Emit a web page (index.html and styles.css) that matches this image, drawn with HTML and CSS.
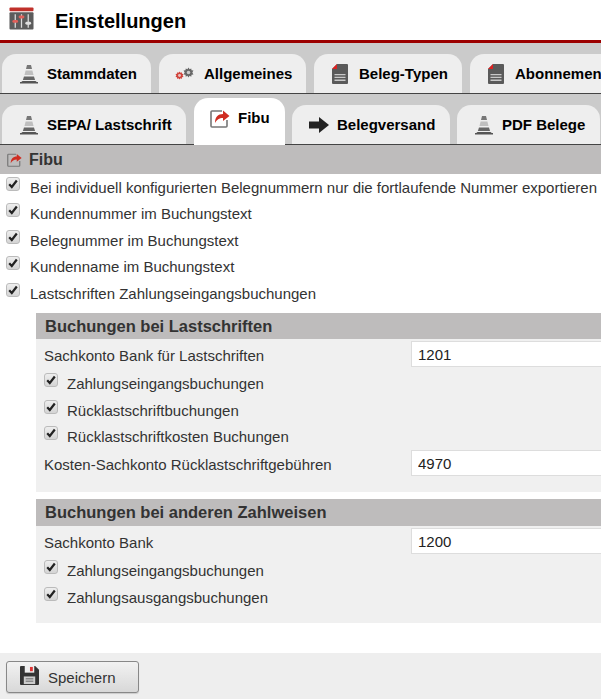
FILE: index.html
```html
<!DOCTYPE html>
<html lang="de">
<head>
<meta charset="utf-8">
<title>Einstellungen</title>
<link rel="stylesheet" href="styles.css">
</head>
<body>
<svg class="defs" width="0" height="0" aria-hidden="true">
  <symbol id="cone" viewBox="0 0 20 20">
    <path d="M8 1h4l1 4H7z" fill="#777"/>
    <path d="M6.600 6.500h6.800l1.100 4.500h-9z" fill="#999" opacity=".55"/>
    <path d="M5 12.500h10l1.100 3.500H3.900z" fill="#666"/>
    <path d="M1 19l2.500-2h13l2.500 2z" fill="#555"/>
    <rect x="1" y="18" width="18" height="1.500" fill="#555"/>
  </symbol>
  <symbol id="doc" viewBox="0 0 16 20">
    <path d="M5 0h10a1 1 0 0 1 1 1v18a1 1 0 0 1-1 1H1a1 1 0 0 1-1-1V5z" fill="#5a5a5a"/>
    <path d="M0 5l5-5v5z" fill="#d22"/>
    <path d="M2.500 10h11v1.300h-11zM2.500 12.800h11v1.300h-11zM2.500 15.600h11v1.300h-11z" fill="#c9c9c9"/>
  </symbol>
  <symbol id="export" viewBox="0 0 20 20">
    <path d="M12 3H2a1 1 0 0 0-1 1v14a1 1 0 0 0 1 1h14a1 1 0 0 0 1-1v-6" fill="none" stroke="#777" stroke-width="1.600"/>
    <path d="M5 15c0-6 3-9 8-9V2.500l6.500 5.500-6.500 5V10c-4 0-6 1.500-8 5z" fill="#cf2d22"/>
  </symbol>
  <symbol id="gear" viewBox="0 0 20 20">
    <path d="M10 1l2 3 3-1.500.5 3.500 3.500.5L17 10l2 3.500-3.500.5-.5 3.500-3-1.500-2 3-2-3L5 17.500 4.500 14 1 13.500 3 10 1 6.500 4.500 6 5 2.500 8 4z" fill="currentColor"/>
    <circle cx="10" cy="10" r="3.200" fill="#eee" opacity=".75"/>
  </symbol>
  <symbol id="arrow" viewBox="0 0 20 16">
    <path d="M0 4.500h10V0l10 8-10 8v-4.500H0z" fill="#222"/>
  </symbol>
</svg>

<header class="topbar">
  <svg class="app-icon" viewBox="0 0 26 23" aria-hidden="true">
    <rect x="0.500" y="0" width="25" height="4" rx="1" fill="#c0302a"/>
    <rect x="0.500" y="5" width="25" height="18" rx="1" fill="#5c5c5c"/>
    <path d="M6.500 7v14M13 7v14M20 7v14" stroke="#ddd" stroke-width="1.300"/>
    <rect x="3.500" y="13" width="6" height="3" rx="1.500" fill="#e0605a"/>
    <rect x="10" y="8.500" width="6" height="3" rx="1.500" fill="#e0605a"/>
    <rect x="17" y="15" width="6" height="3" rx="1.500" fill="#e0e0e0"/>
  </svg>
  <h1 class="title">Einstellungen</h1>
</header>

<nav class="tabs">
  <div class="tab-row">
    <a class="tab w-stamm"><svg class="tab-icon"><use href="#cone"/></svg>Stammdaten</a>
    <a class="tab w-allg"><span class="gears"><svg class="gear-red"><use href="#gear"/></svg><svg class="gear-grey"><use href="#gear"/></svg></span>Allgemeines</a>
    <a class="tab w-typen"><svg class="tab-icon doc-icon"><use href="#doc"/></svg>Beleg-Typen</a>
    <a class="tab w-abo"><svg class="tab-icon doc-icon"><use href="#doc"/></svg>Abonnements</a>
  </div>
  <div class="tab-row second-row">
    <a class="tab w-sepa"><svg class="tab-icon"><use href="#cone"/></svg>SEPA/ Lastschrift</a>
    <a class="tab active w-fibu"><svg class="tab-icon"><use href="#export"/></svg>Fibu</a>
    <a class="tab w-versand"><svg class="tab-icon arrow-icon"><use href="#arrow"/></svg>Belegversand</a>
    <a class="tab w-pdf"><svg class="tab-icon"><use href="#cone"/></svg>PDF Belege</a>
  </div>
</nav>

<main>
  <h2 class="page-head"><svg class="head-icon"><use href="#export"/></svg>Fibu</h2>

  <div class="options">
    <label class="row"><span class="cb"><svg viewBox="0 0 12 12"><path d="M2.200 6.200l2.600 2.800 5-6.500" /></svg></span>Bei individuell konfigurierten Belegnummern nur die fortlaufende Nummer exportieren</label>
    <label class="row"><span class="cb"><svg viewBox="0 0 12 12"><path d="M2.200 6.200l2.600 2.800 5-6.500" /></svg></span>Kundennummer im Buchungstext</label>
    <label class="row"><span class="cb"><svg viewBox="0 0 12 12"><path d="M2.200 6.200l2.600 2.800 5-6.500" /></svg></span>Belegnummer im Buchungstext</label>
    <label class="row"><span class="cb"><svg viewBox="0 0 12 12"><path d="M2.200 6.200l2.600 2.800 5-6.500" /></svg></span>Kundenname im Buchungstext</label>
    <label class="row"><span class="cb"><svg viewBox="0 0 12 12"><path d="M2.200 6.200l2.600 2.800 5-6.500" /></svg></span>Lastschriften Zahlungseingangsbuchungen</label>
  </div>

  <section class="group first">
    <h3 class="group-head">Buchungen bei Lastschriften</h3>
    <div class="group-body">
      <div class="field"><span class="field-label">Sachkonto Bank für Lastschriften</span><input class="field-input" type="text" value="1201"></div>
      <label class="row sub"><span class="cb"><svg viewBox="0 0 12 12"><path d="M2.200 6.200l2.600 2.800 5-6.500" /></svg></span>Zahlungseingangsbuchungen</label>
      <label class="row sub"><span class="cb"><svg viewBox="0 0 12 12"><path d="M2.200 6.200l2.600 2.800 5-6.500" /></svg></span>Rücklastschriftbuchungen</label>
      <label class="row sub"><span class="cb"><svg viewBox="0 0 12 12"><path d="M2.200 6.200l2.600 2.800 5-6.500" /></svg></span>Rücklastschriftkosten Buchungen</label>
      <div class="field"><span class="field-label">Kosten-Sachkonto Rücklastschriftgebühren</span><input class="field-input" type="text" value="4970"></div>
    </div>
  </section>

  <section class="group second">
    <h3 class="group-head second-head">Buchungen bei anderen Zahlweisen</h3>
    <div class="group-body">
      <div class="field"><span class="field-label">Sachkonto Bank</span><input class="field-input" type="text" value="1200"></div>
      <label class="row sub"><span class="cb"><svg viewBox="0 0 12 12"><path d="M2.200 6.200l2.600 2.800 5-6.500" /></svg></span>Zahlungseingangsbuchungen</label>
      <label class="row sub"><span class="cb"><svg viewBox="0 0 12 12"><path d="M2.200 6.200l2.600 2.800 5-6.500" /></svg></span>Zahlungsausgangsbuchungen</label>
    </div>
  </section>
</main>

<footer class="footer">
  <button class="save" type="button">
    <svg class="save-icon" viewBox="0 0 20 20" aria-hidden="true">
      <path d="M1 0h15l4 4v15a1 1 0 0 1-1 1H1a1 1 0 0 1-1-1V1a1 1 0 0 1 1-1z" fill="#333"/>
      <rect x="5" y="0" width="10" height="7" fill="#eee"/>
      <rect x="10.500" y="1" width="3" height="4.500" fill="#d33"/>
      <rect x="4" y="11" width="12" height="8" fill="#ccc"/>
      <path d="M6 13.500h8M6 16h8" stroke="#666" stroke-width="1"/>
    </svg>Speichern
  </button>
</footer>
</body>
</html>
```
FILE: styles.css
```css
* { box-sizing: border-box; }
html, body { margin: 0; padding: 0; }
body {
  width: 601px;
  height: 699px;
  overflow: hidden;
  background: #fff;
  color: #222;
  font-family: "Liberation Sans", Arial, sans-serif;
  font-size: 15px;
  position: relative;
}
.defs { display: block; height: 0; }

.topbar {
  height: 43px;
  border-bottom: 3px solid #9c0000;
  display: flex;
  align-items: center;
  padding-left: 9px;
}
.app-icon { width: 25px; height: 23px; margin-top: -3px; }
.title {
  margin: 3px 0 0 21px;
  font-size: 20px;
  font-weight: bold;
  color: #000;
}

.tabs { background: #cbcbcb; height: 102px; padding-top: 11px; }
.tab-row {
  display: flex;
  align-items: flex-end;
  gap: 8px;
  height: 40px;
  padding-left: 2px;
  border-bottom: 1px solid #444;
  white-space: nowrap;
  overflow: hidden;
}
.second-row { height: 51px; gap: 7px; overflow: visible; }
.tab {
  flex: none;
  height: 39px;
  display: flex;
  align-items: center;
  background: #eee;
  border-radius: 14px 14px 0 0;
  color: #000;
  font-size: 15px;
  font-weight: bold;
  padding-left: 17px;
}
.tab.active {
  height: 47px;
  background: #fff;
  padding: 0 0 8px 16px;
  margin-bottom: -1px;
}
.tab-icon { width: 20px; height: 20px; margin-right: 8px; flex: none; }
.doc-icon { width: 16px; margin-right: 11px; }
.arrow-icon { height: 16px; }
.w-stamm { width: 149px; }
.w-allg { width: 147px; padding-left: 16px; }
.w-typen { width: 148px; padding-left: 18px; }
.w-abo { width: 160px; padding-left: 18px; }
.w-sepa { width: 184px; }
.w-fibu { width: 91px; margin-left: 1px; }
.w-versand { width: 158px; padding-left: 17px; }
.w-pdf { width: 143px; padding-left: 17px; }
.gears { position: relative; display: block; width: 20px; height: 14px; margin-right: 9px; }
.gears svg { position: absolute; display: block; }
.gear-red { left: 0; top: 4px; width: 9px; height: 9px; color: #d0423a; }
.gear-grey { left: 8px; top: 0; width: 11px; height: 11px; color: #666; }

.page-head {
  margin: 0;
  height: 29px;
  background: #bebcbc;
  display: flex;
  align-items: center;
  padding-left: 7px;
  font-size: 16px;
  font-weight: bold;
  color: #333;
}
.head-icon { width: 15px; height: 15px; margin-right: 7px; }

.row {
  display: flex;
  align-items: center;
  height: 26.500px;
  color: #333;
}
.options .row { padding-left: 6px; }
.cb {
  flex: none;
  width: 14px;
  height: 14px;
  margin-right: 10px;
  margin-top: -7px;
  border: 1px solid #bbb;
  border-radius: 3px;
  background: linear-gradient(#eee, #d4d4d4);
  display: block;
}
.cb svg { display: block; width: 12px; height: 12px; }
.cb path { fill: none; stroke: #222; stroke-width: 2.200; }

.group { margin-left: 36px; background: #f0f0f0; }
.first { margin-top: 6.500px; height: 179px; }
.second { margin-top: 7px; height: 124px; }
.group-head {
  margin: 0;
  height: 26px;
  line-height: 26px;
  background: #bebcbc;
  padding-left: 9px;
  font-size: 16.500px;
  font-weight: bold;
  color: #333;
}
.second-head { height: 27px; line-height: 27px; }
.group-body { padding-top: 2px; }
.field {
  display: flex;
  align-items: center;
  height: 26.500px;
  margin-bottom: 3px;
  padding-left: 8px;
  color: #333;
}
.field-label { width: 367px; flex: none; padding-top: 2px; }
.field-input {
  flex: none;
  width: 220px;
  height: 26px;
  border: 1px solid #ddd;
  background: #fff;
  padding: 0 6px;
  font: 15px "Liberation Sans", Arial, sans-serif;
  color: #222;
}
.sub { padding-left: 8px; }
.sub .cb { margin-right: 9px; }

.footer {
  position: absolute;
  left: 0;
  right: 0;
  bottom: 0;
  height: 46px;
  background: #eee;
  padding: 8px 0 0 6px;
}
.save {
  width: 133px;
  height: 32px;
  display: flex;
  align-items: center;
  padding: 0 0 0 13px;
  border: 1px solid #888;
  border-radius: 3px;
  background: linear-gradient(#f2f2f2, #d8d8d8);
  box-shadow: 0 1px 1px rgba(0,0,0,.15);
  font: 15px "Liberation Sans", Arial, sans-serif;
  color: #333;
}
.save-icon { width: 19px; height: 19px; margin-right: 9px; margin-top: -3px; }
```
